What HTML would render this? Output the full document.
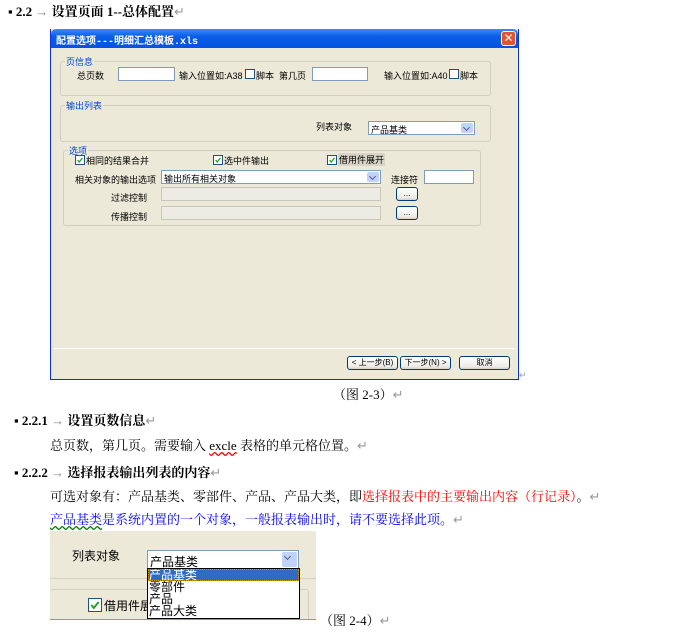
<!DOCTYPE html>
<html><head><meta charset="utf-8"><style>
*{margin:0;padding:0;box-sizing:border-box}
body{width:689px;height:636px;background:#fff;position:relative;overflow:hidden;font-family:"Liberation Serif","Noto Serif CJK SC",serif;color:#000}
.a{position:absolute;white-space:nowrap}
.s{font-family:"Liberation Sans","Noto Sans CJK SC",sans-serif;font-size:9px;color:#000}
.h{font-weight:bold;font-size:13px}
.p{font-size:13px}
.dlg{position:absolute;left:50px;top:29px;width:469px;height:351px;background:#ece9d8;border:1px solid #0831d9;border-top:none}
.tb{position:absolute;left:0;top:0;width:467px;height:19px;background:linear-gradient(#3a8cf6,#0a5de8 40%,#0553e0);border-radius:5px 5px 0 0}
.gb{position:absolute;border:1px solid #d0d0bf;border-radius:3px}
.gl{position:absolute;top:-7px;left:4px;background:#ece9d8;color:#0046d5;font-size:9px;padding:0 1px;font-family:"Liberation Sans","Noto Sans CJK SC",sans-serif}
.in{position:absolute;background:#fff;border:1px solid #7f9db9}
.cb{position:absolute;width:10px;height:10px;background:#fff;border:1px solid #1c5180}
.cb svg{position:absolute;left:0;top:0;width:100%;height:100%}
.dd{position:absolute;right:1px;top:1px;bottom:1px;width:12px;background:#c1d3fb;border-radius:2px}
.dd::after{content:"";position:absolute;left:3px;top:2px;width:4px;height:4px;border-right:1.5px solid #4d6185;border-bottom:1.5px solid #4d6185;transform:rotate(45deg)}
.gr{position:absolute;background:#ecebe4;border:1px solid #c9c7ba}
.bt{position:absolute;border:1px solid #003c74;border-radius:3px;background:linear-gradient(#fff,#ecebe6 80%,#d6d0c5);font-size:8px;line-height:12px;text-align:center;font-family:"Liberation Sans","Noto Sans CJK SC",sans-serif}
.f{font-family:"Liberation Sans","Noto Sans CJK SC",sans-serif}
</style></head><body>
<div class="a h" style="left:8px;top:1px">▪ 2.2 <span style="font-weight:normal;color:#888">→</span> 设置页面 1--总体配置<span style="color:#999;font-weight:normal">↵</span></div>
<div class="dlg">
 <div class="tb"><span class="a" style="left:5px;top:3px;color:#fff;font-size:10px;font-weight:bold;font-family:'Liberation Mono','Noto Sans CJK SC',monospace">配置选项---明细汇总模板.xls</span>
 <div class="a" style="left:450px;top:2px;width:15px;height:15px;background:#e2542f;border:1px solid #fff;border-radius:3px;color:#fff;font-size:12px;line-height:13px;text-align:center;font-family:'Liberation Sans'">✕</div></div>
 <div class="gb" style="left:9px;top:32px;width:431px;height:35px"><span class="gl">页信息</span></div>
 <span class="a s" style="left:26px;top:40px">总页数</span>
 <div class="in" style="left:67px;top:38px;width:57px;height:14px"></div>
 <span class="a s" style="left:128px;top:40px">输入位置如:A38</span>
 <div class="cb" style="left:194px;top:40px"></div><span class="a s" style="left:205px;top:40px">脚本</span>
 <span class="a s" style="left:228px;top:40px">第几页</span>
 <div class="in" style="left:261px;top:38px;width:56px;height:14px"></div>
 <span class="a s" style="left:333px;top:40px">输入位置如:A40</span>
 <div class="cb" style="left:398px;top:40px"></div><span class="a s" style="left:409px;top:40px">脚本</span>

 <div class="gb" style="left:9px;top:76px;width:431px;height:37px"><span class="gl">输出列表</span></div>
 <span class="a s" style="left:265px;top:91px">列表对象</span>
 <div class="in" style="left:317px;top:92px;width:107px;height:14px"><span class="a s" style="left:2px;top:1px">产品基类</span><div class="dd"></div></div>

 <div class="gb" style="left:12px;top:121px;width:418px;height:76px"><span class="gl">选项</span></div>
 <div class="cb" style="left:24px;top:126px"><svg viewBox="0 0 10 10"><path d="M2 5 L4 7.5 L8 2.5" fill="none" stroke="#21a121" stroke-width="1.6"/></svg></div><span class="a s" style="left:35px;top:125px">相同的结果合并</span>
 <div class="cb" style="left:162px;top:126px"><svg viewBox="0 0 10 10"><path d="M2 5 L4 7.5 L8 2.5" fill="none" stroke="#21a121" stroke-width="1.6"/></svg></div><span class="a s" style="left:173px;top:125px">选中件输出</span>
 <div class="cb" style="left:276px;top:126px"><svg viewBox="0 0 10 10"><path d="M2 5 L4 7.5 L8 2.5" fill="none" stroke="#21a121" stroke-width="1.6"/></svg></div><span class="a s" style="left:287px;top:124px;background:#d8d5c8;padding:0 1px">借用件展开</span>
 <span class="a s" style="left:24px;top:144px">相关对象的输出选项</span>
 <div class="in" style="left:110px;top:141px;width:220px;height:14px"><span class="a s" style="left:2px;top:1px">输出所有相关对象</span><div class="dd"></div></div>
 <span class="a s" style="left:340px;top:144px">连接符</span>
 <div class="in" style="left:373px;top:141px;width:50px;height:14px"></div>
 <span class="a s" style="left:60px;top:162px">过滤控制</span>
 <div class="gr" style="left:110px;top:158px;width:220px;height:14px"></div>
 <div class="bt" style="left:345px;top:158px;width:22px;height:14px">...</div>
 <span class="a s" style="left:60px;top:181px">传播控制</span>
 <div class="gr" style="left:110px;top:177px;width:220px;height:14px"></div>
 <div class="bt" style="left:345px;top:177px;width:22px;height:14px">...</div>

 <div class="a" style="left:3px;top:319px;width:461px;height:1px;background:#c5c2b2;border-bottom:1px solid #fff"></div>
 <div class="bt" style="left:296px;top:327px;width:51px;height:14px">&lt; 上一步(B)</div>
 <div class="bt" style="left:349px;top:327px;width:51px;height:14px">下一步(N) &gt;</div>
 <div class="bt" style="left:408px;top:327px;width:51px;height:14px">取消</div>
</div>
<div class="a" style="left:519px;top:370px;font-size:9px;color:#999">↵</div>
<div class="a p" style="left:333px;top:384px">（图 2-3）<span style="color:#999">↵</span></div>
<div class="a h" style="left:14px;top:410px">▪ 2.2.1 <span style="font-weight:normal;color:#888">→</span> 设置页数信息<span style="color:#999;font-weight:normal">↵</span></div>
<div class="a p" style="left:50px;top:435px">总页数，第几页。需要输入 <span style="text-decoration:underline wavy red">excle</span> 表格的单元格位置。<span style="color:#999">↵</span></div>
<div class="a h" style="left:14px;top:462px">▪ 2.2.2 <span style="font-weight:normal;color:#888">→</span> 选择报表输出列表的内容<span style="color:#999;font-weight:normal">↵</span></div>
<div class="a p" style="left:50px;top:486px">可选对象有：产品基类、零部件、产品、产品大类，即<span style="color:#f00">选择报表中的主要输出内容（行记录）</span>。<span style="color:#999">↵</span></div>
<div class="a p" style="left:50px;top:509px;color:#00f"><span style="text-decoration:underline wavy green">产品基类</span>是系统内置的一个对象，一般报表输出时，请不要选择此项。<span style="color:#999">↵</span></div>

<div class="a" style="left:50px;top:531px;width:266px;height:91px;background:#ece9d8;overflow:hidden">
 <div class="a" style="left:0;top:47px;width:266px;height:1px;background:#d0d0bf"></div>
 <div class="a" style="left:0;top:58px;width:259px;height:40px;border:1px solid #d0d0bf;border-left:none;border-radius:3px"></div>
 <span class="a f" style="left:22px;top:16px;font-size:12px">列表对象</span>
 <div class="in" style="left:97px;top:19px;width:152px;height:19px"><span class="a f" style="left:2px;top:2px;font-size:12px">产品基类</span><div class="dd" style="width:15px"></div></div>
 <div class="cb" style="left:38px;top:67px;width:14px;height:14px"><svg viewBox="0 0 10 10"><path d="M2 5 L4 7.5 L8 2.5" fill="none" stroke="#21a121" stroke-width="1.6"/></svg></div>
 <span class="a f" style="left:54px;top:66px;font-size:12px">借用件展开</span>
 <div class="a" style="left:0;top:88px;width:266px;height:3px;background:#fff;border-top:1px solid #7f9db9"></div>
 <div class="a" style="left:97px;top:37px;width:153px;height:51px;background:#fff;border:1px solid #000;font-size:12px;line-height:12px;font-family:'Liberation Sans','Noto Sans CJK SC',sans-serif;overflow:hidden">
  <div style="background:#316ac5;color:#fff;padding-left:1px;height:12px;outline:1px dotted #c90;outline-offset:-1px">产品基类</div>
  <div style="padding-left:1px;height:12px">零部件</div>
  <div style="padding-left:1px;height:12px">产品</div>
  <div style="padding-left:1px;height:12px">产品大类</div>
 </div>
</div>
<div class="a p" style="left:320px;top:610px">（图 2-4）<span style="color:#999">↵</span></div>
</body></html>
